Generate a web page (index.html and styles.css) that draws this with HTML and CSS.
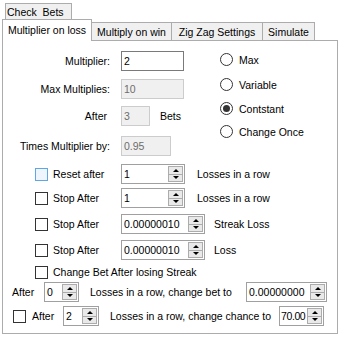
FILE: index.html
```html
<!DOCTYPE html>
<html lang="en">
<head>
  <meta charset="UTF-8" />
  <title>Check Bets</title>
  <link rel="stylesheet" href="styles.css">
</head>
<body>
  <div class="outer-tabs">
    <span class="outer-tab">Check&nbsp; Bets</span>
  </div>
  <div class="tabs">
    <span class="tab active w-loss">Multiplier on loss</span>
    <span class="tab w-win">Multiply on win</span>
    <span class="tab w-zig">Zig Zag Settings</span>
    <span class="tab w-sim">Simulate</span>
  </div>
  <div class="page">
    <div class="top">
      <div class="fields">
        <div class="field">
          <span class="flabel">Multiplier:</span>
          <span class="box w63">2</span>
        </div>
        <div class="field mt8">
          <span class="flabel">Max Multiplies:</span>
          <span class="box off w63">10</span>
        </div>
        <div class="field mt7">
          <span class="flabel short">After</span>
          <span class="box off w29">3</span>
          <span class="unit">Bets</span>
        </div>
        <div class="field mt10">
          <span class="flabel">Times Multiplier by:</span>
          <span class="box off w50">0.95</span>
        </div>
      </div>
      <div class="radios">
        <div class="radio"><i class="dot"></i>Max</div>
        <div class="radio mt8"><i class="dot"></i>Variable</div>
        <div class="radio mt7"><i class="dot on"></i>Contstant</div>
        <div class="radio mt6"><i class="dot"></i>Change Once</div>
      </div>
    </div>

    <!-- stop / reset options -->
    <div class="opt mt8">
      <i class="check hover"></i><span class="olabel">Reset after</span>
      <span class="spin w64"><span class="val">1</span><span class="btns"><i class="up"></i><i class="down"></i></span></span>
      <span class="tail g12">Losses in a row</span>
    </div>
    <div class="opt mt4">
      <i class="check"></i><span class="olabel">Stop After</span>
      <span class="spin w64"><span class="val">1</span><span class="btns"><i class="up"></i><i class="down"></i></span></span>
      <span class="tail g12">Losses in a row</span>
    </div>
    <div class="opt mt6">
      <i class="check"></i><span class="olabel">Stop After</span>
      <span class="spin w84"><span class="val">0.00000010</span><span class="btns"><i class="up"></i><i class="down"></i></span></span>
      <span class="tail g9">Streak Loss</span>
    </div>
    <div class="opt mt6">
      <i class="check"></i><span class="olabel">Stop After</span>
      <span class="spin w84"><span class="val">0.00000010</span><span class="btns"><i class="up"></i><i class="down"></i></span></span>
      <span class="tail g9">Loss</span>
    </div>
    <div class="opt mt2">
      <i class="check"></i><span>Change Bet After losing Streak</span>
    </div>

    <!-- streak changes -->
    <div class="opt streak">
      <span class="after1">After</span>
      <span class="spin w35"><span class="val">0</span><span class="btns"><i class="up"></i><i class="down"></i></span></span>
      <span class="tail g11 bet-to">Losses in a row, change bet to</span>
      <span class="spin w81"><span class="val">0.00000000</span><span class="btns"><i class="up"></i><i class="down"></i></span></span>
    </div>
    <div class="opt chance mt4">
      <i class="check"></i><span class="after2">After</span>
      <span class="spin w36"><span class="val">2</span><span class="btns"><i class="up"></i><i class="down"></i></span></span>
      <span class="tail g11 chance-to">Losses in a row, change chance to</span>
      <span class="spin w45"><span class="val tight">70.00</span><span class="btns"><i class="up"></i><i class="down"></i></span></span>
    </div>
  </div>
</body>
</html>
```

FILE: styles.css
```css
/* Reset & Global Styles */
html, body {
  margin: 0;
  padding: 0;
  background: #fff;
}
body {
  width: 341px;
  height: 340px;
  overflow: hidden;
  font-family: "Liberation Sans", Arial, sans-serif;
  font-size: 10.5px;
  color: #000;
}
* {
  box-sizing: border-box;
}
i {
  display: block;
  flex-shrink: 0;
}

/* Outer tab */
.outer-tabs {
  height: 19px;
  padding: 3px 0 0 5px;
}
.outer-tab {
  display: block;
  width: 67px;
  height: 16px;
  padding: 2px 0 0 1px;
  line-height: 13px;
  background: #f0f0f0;
  border: 1px solid #acacac;
  border-bottom: none;
}

/* Inner tab strip */
.tabs {
  display: flex;
  align-items: flex-end;
  height: 21px;
  padding-left: 2px;
}
.tab {
  height: 18px;
  margin-left: -1px;
  padding-top: 2px;
  line-height: 14px;
  text-align: center;
  background: #f0f0f0;
  border: 1px solid #acacac;
  border-bottom: none;
}
.tab.active {
  position: relative;
  z-index: 1;
  height: 22px;
  margin-left: 0;
  margin-bottom: -1px;
  padding-top: 3px;
  background: #fff;
}
.w-loss { width: 90px; }
.w-win { width: 81px; }
.w-zig { width: 92px; }
.w-sim { width: 53px; }

/* Tab page */
.page {
  width: 336px;
  height: 294px;
  margin-left: 2px;
  border: 1px solid #acacac;
  background: #fff;
}

/* Top block: fields + radio group */
.top {
  display: flex;
  padding-top: 10px;
}
.field {
  display: flex;
  align-items: center;
  height: 20px;
}
.flabel {
  width: 107px;
  margin-right: 11px;
  text-align: right;
}
.flabel.short {
  padding-right: 3px;
}
.unit {
  margin-left: 10px;
}
.box {
  display: flex;
  align-items: center;
  height: 20px;
  padding-left: 2px;
  border: 1px solid #7a7a7a;
  background: #fff;
}
.box.off {
  color: #6d6d6d;
  background: #f0f0f0;
  border-color: #cccccc;
}
.w29 { width: 29px; }
.w50 { width: 50px; }
.w63 { width: 63px; }

.radios {
  margin-left: 36px;
}
.radio {
  display: flex;
  align-items: center;
  height: 17px;
}
.dot {
  width: 13px;
  height: 13px;
  margin-right: 6px;
  border: 1px solid #333;
  border-radius: 50%;
  background: #fff;
  display: flex;
  align-items: center;
  justify-content: center;
}
.dot.on::after {
  content: "";
  width: 7px;
  height: 7px;
  border-radius: 50%;
  background: #333;
}

/* Option rows */
.opt {
  display: flex;
  align-items: center;
  height: 20px;
  padding-left: 32px;
}
.check {
  width: 13px;
  height: 13px;
  margin-right: 5px;
  border: 1px solid #333;
  background: #fff;
}
.check.hover {
  border-color: #5ea6e6;
  background: #eef5fc;
}
.olabel {
  width: 68px;
}
.tail {
  white-space: nowrap;
}
.g9 { margin-left: 9px; }
.g11 { margin-left: 11px; }
.g12 { margin-left: 12px; }

.streak {
  padding-left: 9px;
}
.after1 {
  width: 32px;
}
.bet-to {
  width: 156px;
}
.chance {
  padding-left: 10px;
}
.chance .check {
  margin-right: 6px;
}
.after2 {
  width: 31px;
}
.chance-to {
  width: 169px;
}

/* Numeric up-down */
.spin {
  display: flex;
  height: 20px;
  border: 1px solid #a0a0a0;
  background: #fff;
}
.val {
  flex: 1;
  display: flex;
  align-items: center;
  padding-left: 2px;
  white-space: nowrap;
}
.val.tight {
  padding-left: 1px;
  letter-spacing: -0.4px;
}
.btns {
  display: flex;
  flex-direction: column;
  width: 15px;
  margin: 1px;
  border: 1px solid #acacac;
}
.btns i {
  flex: 1;
  display: flex;
  align-items: center;
  justify-content: center;
  background: #e9e9e9;
}
.btns i + i {
  border-top: 1px solid #acacac;
}
.up::after,
.down::after {
  content: "";
  border-left: 3px solid transparent;
  border-right: 3px solid transparent;
}
.up::after {
  border-bottom: 3px solid #000;
}
.down::after {
  border-top: 3px solid #000;
}
.w35 { width: 35px; }
.w36 { width: 36px; }
.w45 { width: 45px; }
.w64 { width: 64px; }
.w81 { width: 81px; }
.w84 { width: 84px; }

/* Spacing helpers */
.mt2 { margin-top: 2px; }
.mt4 { margin-top: 4px; }
.mt6 { margin-top: 6px; }
.mt7 { margin-top: 7px; }
.mt8 { margin-top: 8px; }
.mt10 { margin-top: 10px; }
```
